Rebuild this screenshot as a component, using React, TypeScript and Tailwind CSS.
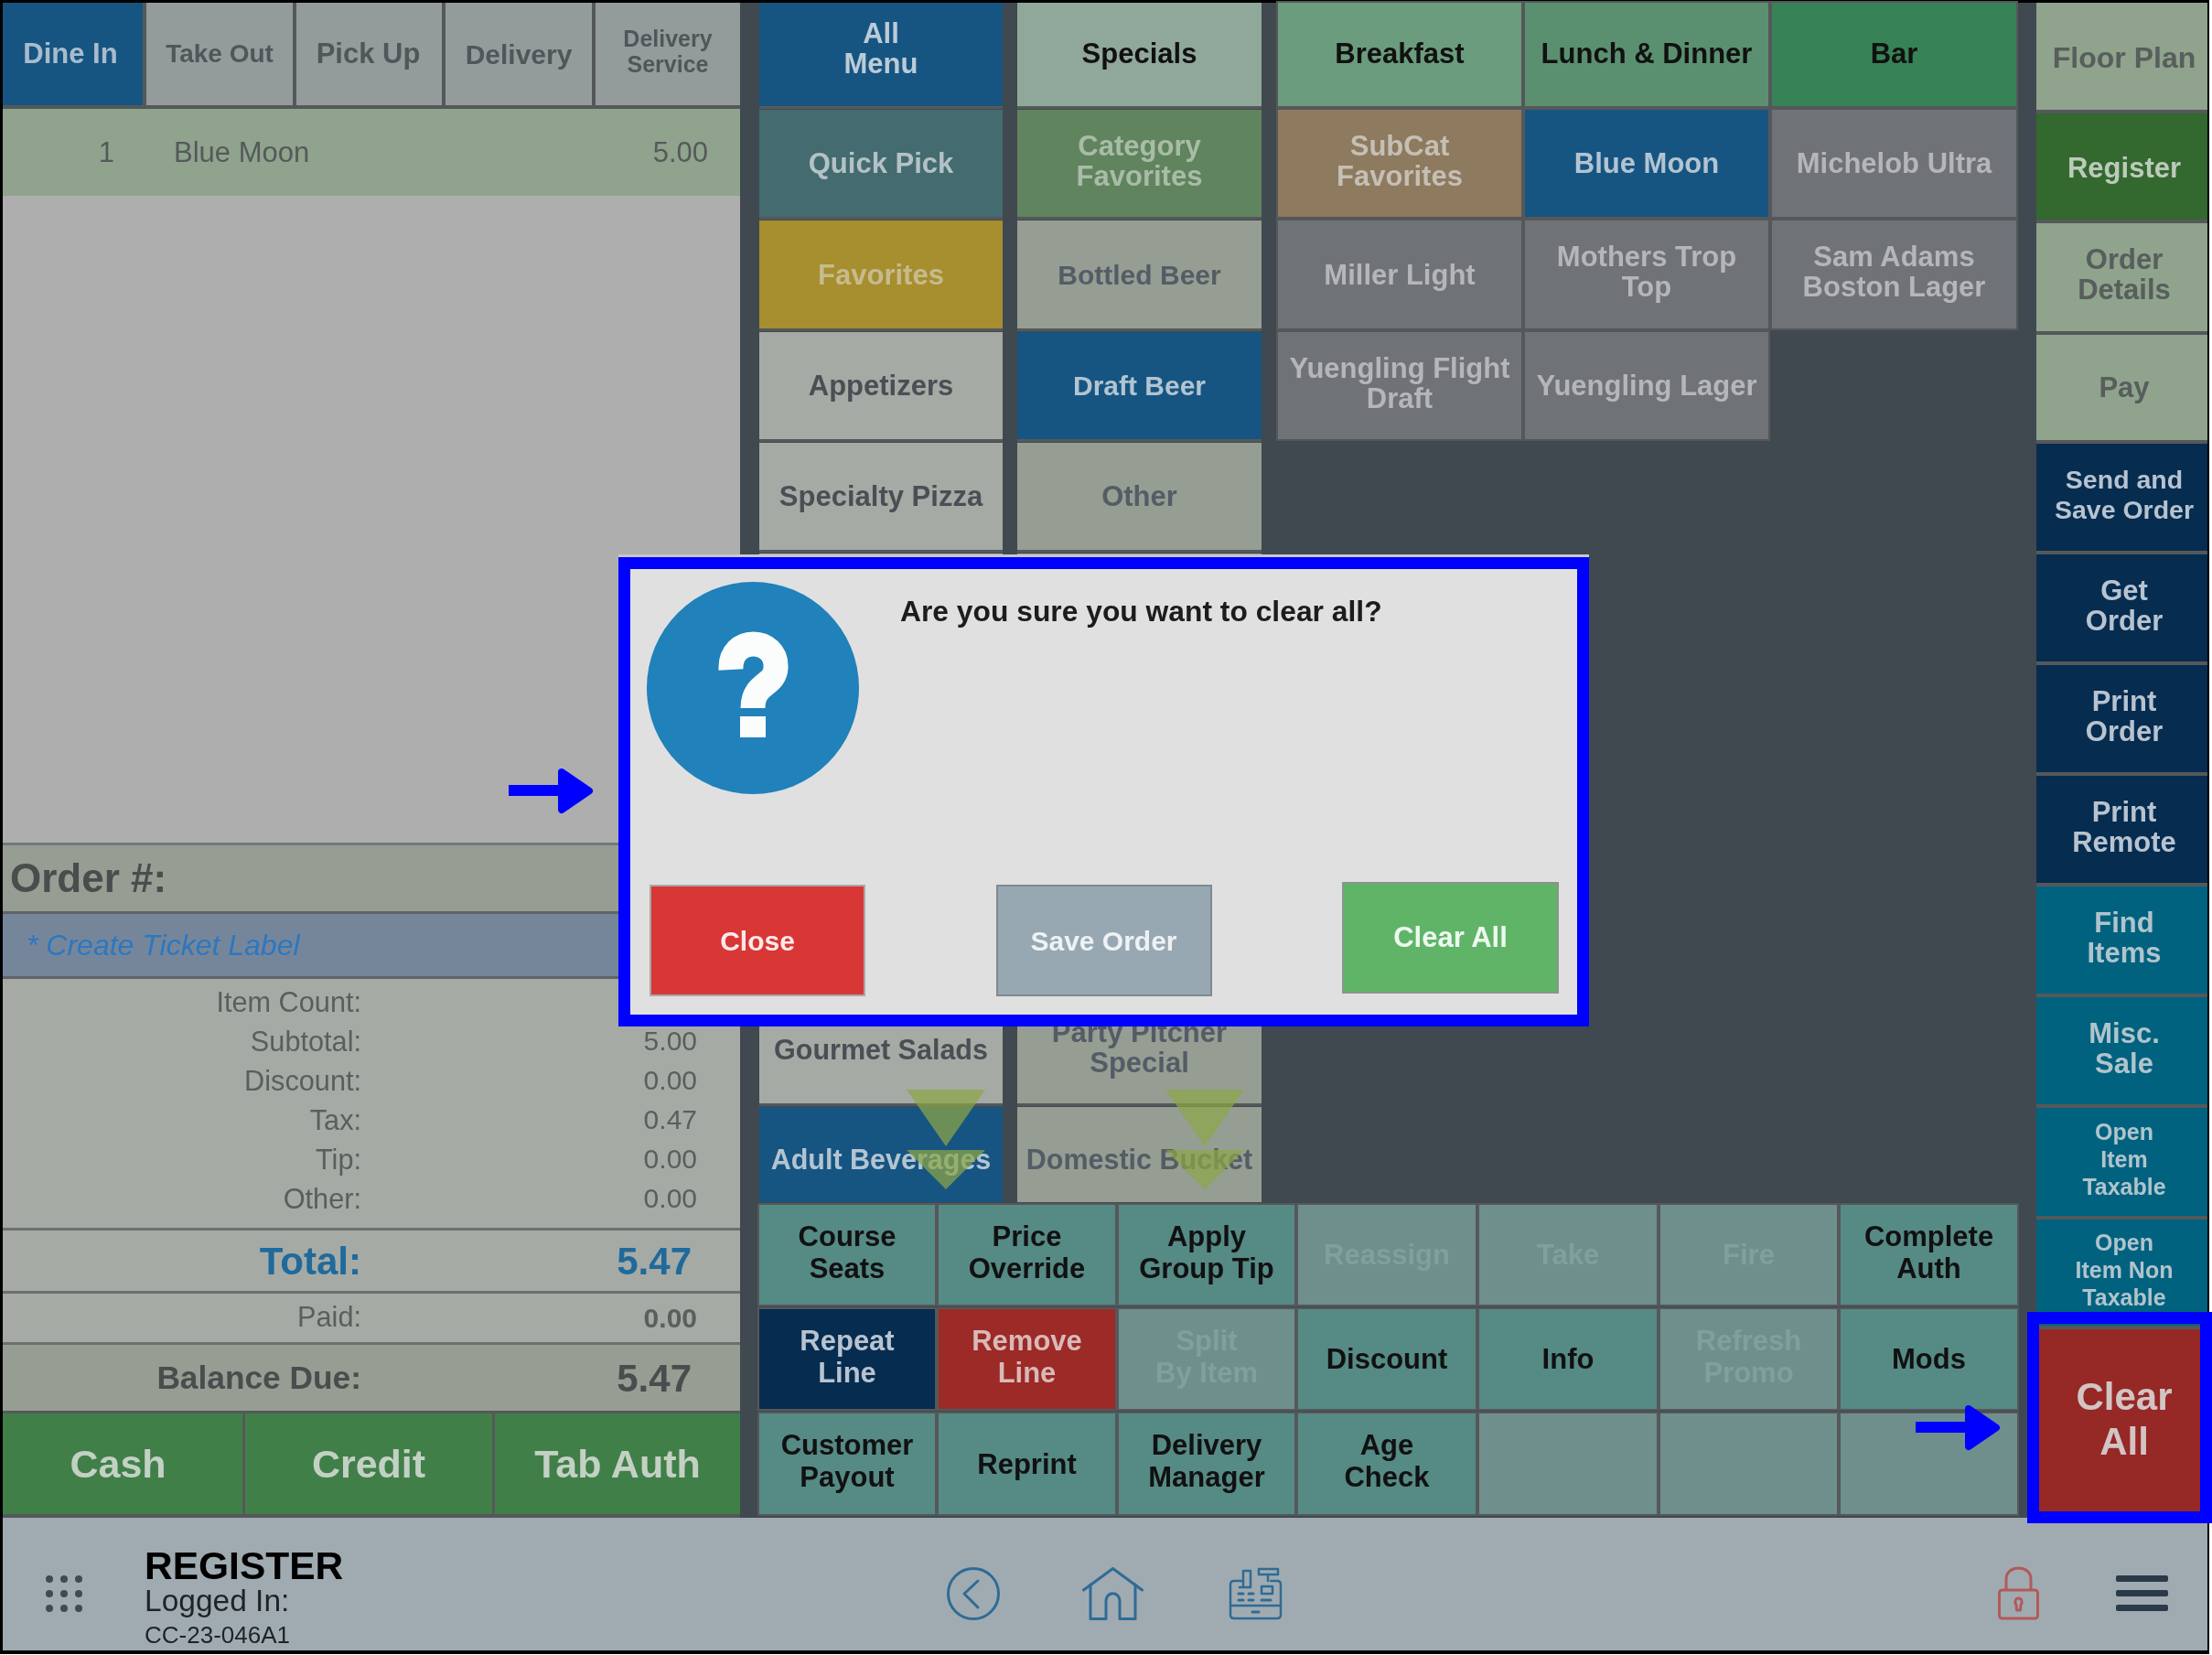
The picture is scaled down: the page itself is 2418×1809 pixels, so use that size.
type BtnProps = {
  label?: string;
  bg: string;
  text?: string;
  size?: string;
  extra?: string;
};

function Btn({ label = '', bg, text = '', size = 'text-[31px] leading-[33px] font-bold', extra = '' }: BtnProps) {
  // two and three line labels sit a little above the centre in the original
  const lift = label.includes('\n') ? 'pb-[6px]' : '';
  return (
    <div className={`flex items-center justify-center text-center whitespace-pre-line ${lift} ${bg} ${text} ${size} ${extra}`}>
      {label}
    </div>
  );
}

const BAR = 'shadow-[0_3px_0_#55585a]';
const BLUE = 'bg-[#165582]';
const LIGHT = 'bg-[#a6aaa5]';
const MID = 'bg-[#969d93]';
const SLATE = 'bg-[#6f7277]';

const tabs = [
  { label: 'Dine In', w: 'w-[153px] pr-[5px]', bg: BLUE, text: 'text-[#a9bccb]', size: 'text-[31px] font-bold' },
  { label: 'Take Out', w: 'w-[160px]', bg: 'bg-[#949c9b]', text: 'text-[#51565a]', size: 'text-[28px] font-bold' },
  { label: 'Pick Up', w: 'w-[159px] pr-[2px]', bg: 'bg-[#949c9b]', text: 'text-[#51565a]', size: 'text-[31px] font-bold' },
  { label: 'Delivery', w: 'w-[160px]', bg: 'bg-[#949c9b]', text: 'text-[#51565a]', size: 'text-[30px] font-bold' },
  { label: 'Delivery\nService', w: 'flex-1', bg: 'bg-[#949c9b]', text: 'text-[#51565a]', size: 'text-[25px] leading-[28px] font-bold' },
];

const summary = [
  ['Item Count:', ''],
  ['Subtotal:', '5.00'],
  ['Discount:', '0.00'],
  ['Tax:', '0.47'],
  ['Tip:', '0.00'],
  ['Other:', '0.00'],
];

const catLeft = [
  { label: 'All\nMenu', bg: BLUE, text: 'text-[#bccbd6]', extra: 'pb-[13px]!' },
  { label: 'Specials', bg: 'bg-[#90a89a]', text: 'text-[#111]', extra: 'pb-[2px]' },
  { label: 'Quick Pick', bg: 'bg-[#436b70]', text: 'text-[#b3c2c4]' },
  { label: 'Category\nFavorites', bg: 'bg-[#60845d]', text: 'text-[#a9bca8]' },
  { label: 'Favorites', bg: 'bg-[#a78e2e]', text: 'text-[#c6bb8e]' },
  { label: 'Bottled Beer', bg: MID, text: 'text-[#555c66]', extra: 'text-[30px]!' },
  { label: 'Appetizers', bg: LIGHT, text: 'text-[#4a4f55]' },
  { label: 'Draft Beer', bg: BLUE, text: 'text-[#b3c4d1]', extra: 'text-[30px]!' },
  { label: 'Specialty Pizza', bg: LIGHT, text: 'text-[#4a4f55]' },
  { label: 'Other', bg: MID, text: 'text-[#555c66]' },
];

const items = [
  { label: 'Breakfast', bg: 'bg-[#6b9c7d]', text: 'text-[#111]', extra: 'pb-[2px]' },
  { label: 'Lunch & Dinner', bg: 'bg-[#5a906f]', text: 'text-[#111]', extra: 'pb-[2px]' },
  { label: 'Bar', bg: 'bg-[#378256]', text: 'text-[#111]', extra: 'pb-[2px]' },
  { label: 'SubCat\nFavorites', bg: 'bg-[#8d7a5f]', text: 'text-[#c5bfb4]' },
  { label: 'Blue Moon', bg: BLUE, text: 'text-[#b3c4d1]' },
  { label: 'Michelob Ultra', bg: SLATE, text: 'text-[#b4b6b8]' },
  { label: 'Miller Light', bg: SLATE, text: 'text-[#b4b6b8]' },
  { label: 'Mothers Trop\nTop', bg: SLATE, text: 'text-[#b4b6b8]' },
  { label: 'Sam Adams\nBoston Lager', bg: SLATE, text: 'text-[#b4b6b8]' },
  { label: 'Yuengling Flight\nDraft', bg: SLATE, text: 'text-[#b4b6b8]' },
  { label: 'Yuengling Lager', bg: SLATE, text: 'text-[#b4b6b8]' },
];

const TEAL = 'bg-[#568a85]';
const DIM = 'bg-[#6f8f8c]';
const actions = [
  { label: 'Course\nSeats', bg: TEAL, text: 'text-[#111]' },
  { label: 'Price\nOverride', bg: TEAL, text: 'text-[#111]' },
  { label: 'Apply\nGroup Tip', bg: TEAL, text: 'text-[#111]' },
  { label: 'Reassign', bg: DIM, text: 'text-[#80a09d]' },
  { label: 'Take', bg: DIM, text: 'text-[#80a09d]' },
  { label: 'Fire', bg: DIM, text: 'text-[#80a09d]' },
  { label: 'Complete\nAuth', bg: TEAL, text: 'text-[#111]' },
  { label: 'Repeat\nLine', bg: 'bg-[#062c50]', text: 'text-[#b7c3cf]' },
  { label: 'Remove\nLine', bg: 'bg-[#9c2a27]', text: 'text-[#d9b9b8]' },
  { label: 'Split\nBy Item', bg: DIM, text: 'text-[#80a09d]' },
  { label: 'Discount', bg: TEAL, text: 'text-[#111]' },
  { label: 'Info', bg: TEAL, text: 'text-[#111]' },
  { label: 'Refresh\nPromo', bg: DIM, text: 'text-[#80a09d]' },
  { label: 'Mods', bg: TEAL, text: 'text-[#111]' },
  { label: 'Customer\nPayout', bg: TEAL, text: 'text-[#111]' },
  { label: 'Reprint', bg: TEAL, text: 'text-[#111]' },
  { label: 'Delivery\nManager', bg: TEAL, text: 'text-[#111]' },
  { label: 'Age\nCheck', bg: TEAL, text: 'text-[#111]' },
  { label: '', bg: DIM },
  { label: '', bg: DIM },
  { label: '', bg: DIM },
];

const SAGE = 'bg-[#8fa38d]';
const NAVY = 'bg-[#062c50]';
const SEA = 'bg-[#00627f]';
const sideButtons = [
  { label: 'Floor Plan', bg: SAGE, text: 'text-[#575e5c]', size: 'text-[32px] leading-[33px] font-bold pt-[3px]' },
  { label: 'Register', bg: 'bg-[#33682f]', text: 'text-[#bccabb]', size: 'text-[31px] leading-[33px] font-bold pt-[2px]' },
  { label: 'Order\nDetails', bg: SAGE, text: 'text-[#575e5c]', size: 'text-[31px] leading-[33px] font-bold' },
  { label: 'Pay', bg: SAGE, text: 'text-[#575e5c]', size: 'text-[31px] leading-[33px] font-bold' },
  { label: 'Send and\nSave Order', bg: NAVY, text: 'text-[#b7c3cf]', size: 'text-[28.5px] leading-[33px] font-bold' },
  { label: 'Get\nOrder', bg: NAVY, text: 'text-[#b7c3cf]', size: 'text-[31px] leading-[33px] font-bold' },
  { label: 'Print\nOrder', bg: NAVY, text: 'text-[#b7c3cf]', size: 'text-[31px] leading-[33px] font-bold' },
  { label: 'Print\nRemote', bg: NAVY, text: 'text-[#b7c3cf]', size: 'text-[31px] leading-[33px] font-bold' },
  { label: 'Find\nItems', bg: SEA, text: 'text-[#b0c4cc]', size: 'text-[31px] leading-[33px] font-bold' },
  { label: 'Misc.\nSale', bg: SEA, text: 'text-[#b0c4cc]', size: 'text-[31px] leading-[33px] font-bold' },
  { label: 'Open\nItem\nTaxable', bg: SEA, text: 'text-[#b0c4cc]', size: 'text-[25px] leading-[30px] font-bold' },
  { label: 'Open\nItem Non\nTaxable', bg: SEA, text: 'text-[#b0c4cc]', size: 'text-[25px] leading-[30px] font-bold' },
  { label: 'Clear\nAll', bg: 'bg-[#962825]', text: 'text-[#d2c4c4]', size: 'text-[42px] leading-[49px] font-bold' },
];

function Arrow({ className }: { className: string }) {
  return (
    <svg viewBox="0 0 93 51" className={className}>
      <rect x="0" y="19" width="60" height="12" fill="#0000ff" />
      <path d="M58 5 L88 25.5 L58 46 Z" fill="#0000ff" stroke="#0000ff" strokeWidth="8" strokeLinejoin="round" />
    </svg>
  );
}

function DropTriangles({ className }: { className: string }) {
  return (
    <svg viewBox="0 0 86 109" className={className}>
      <polygon points="0,0 86,0 43,62" fill="#8ca646" fillOpacity="0.72" />
      <polygon points="0,66 86,66 43,109" fill="#8ca646" fillOpacity="0.72" />
    </svg>
  );
}

export default function App() {
  return (
    <div className="relative w-[2418px] h-[1809px] bg-white font-['Liberation_Sans',sans-serif] overflow-hidden">
      <div className="w-[2415px] h-[1808px] bg-black pt-[3px] pl-[3px] pr-[2px] pb-[4px] blur-[0.7px]">
        <div className="flex flex-col h-full">
          {/* Main area */}
          <div className="flex shrink-0 h-[1656px] bg-[#40494f]">
            {/* Order panel */}
            <div className="flex flex-col w-[806px] shrink-0">
              <div className="flex h-[116px] gap-[4px] bg-[#55585a] pb-[4px]">
                {tabs.map((t) => (
                  <Btn key={t.label} label={t.label} bg={t.bg} text={t.text} size={t.size} extra={t.w} />
                ))}
              </div>
              <div className="flex items-center h-[95px] pt-[2px] bg-[#8fa38d] text-[31px] text-[#55595a]">
                <span className="w-[122px] text-right">1</span>
                <span className="ml-[65px]">Blue Moon</span>
                <span className="ml-auto pr-[35px]">5.00</span>
              </div>
              <div className="h-[707px] bg-[#aeaeae]" />
              <div className="flex items-center h-[75px] bg-[#969d93] border-t-[3px] border-[#73777a] pl-[8px] text-[44px] font-bold text-[#4a4d4e]">
                Order #:
              </div>
              <div className="flex items-center h-[74px] bg-[#76869a] border-y-[3px] border-[#5f6468] pl-[26px] text-[32px] italic text-[#2c77c0]">
                * Create Ticket Label
              </div>
              <div className="flex flex-col h-[272px] bg-[#a6aaa5] pt-[3px] text-[#5a5e5d]">
                {summary.map(([name, value]) => (
                  <div key={name} className="flex items-center h-[43px]">
                    <span className="w-[392px] pt-[3px] text-right text-[30.7px]">{name}</span>
                    <span className="flex-1 text-right pr-[47px] text-[30px]">{value}</span>
                  </div>
                ))}
              </div>
              <div className="flex items-center h-[69px] bg-[#a6aaa5] border-t-[3px] border-[#6c7070] text-[#1f6a9c] font-bold">
                <span className="w-[392px] text-right text-[42px]">Total:</span>
                <span className="flex-1 text-right pr-[53px] text-[42px]">5.47</span>
              </div>
              <div className="flex items-center h-[56px] bg-[#a6aaa5] border-t-[3px] border-[#6c7070] text-[#5a5e5d]">
                <span className="w-[392px] text-right text-[30.7px]">Paid:</span>
                <span className="flex-1 text-right pr-[47px] text-[30px] font-bold">0.00</span>
              </div>
              <div className="flex items-center h-[75px] bg-[#969d93] border-t-[3px] border-[#6c7070] text-[#4a4d4e] font-bold">
                <span className="w-[392px] text-right text-[35.3px]">Balance Due:</span>
                <span className="flex-1 text-right pr-[53px] text-[42px]">5.47</span>
              </div>
              <div className="flex flex-1 gap-[3px] bg-[#55585a] pt-[3px] pb-[4px]">
                <Btn label="Cash" bg="bg-[#417f48]" text="text-[#c3d1c5]" size="text-[43px] font-bold" extra="w-[262px] pr-[10px]" />
                <Btn label="Credit" bg="bg-[#417f48]" text="text-[#c3d1c5]" size="text-[43px] font-bold" extra="w-[270px]" />
                <Btn label="Tab Auth" bg="bg-[#417f48]" text="text-[#c3d1c5]" size="text-[43px] font-bold" extra="flex-1" />
              </div>
            </div>

            {/* Menu column */}
            <div className="flex flex-col w-[1374px] ml-[21px]">
              <div className="flex h-[1311px] gap-[18px]">
                <div className="relative grid grid-cols-[266px_267px] gap-x-[16px] gap-y-[4px] grid-rows-[113px_117px_118px_117px_117px_117px_117px_117px_117px_117px_104px]">
                  {catLeft.map((c) => (
                    <Btn key={c.label} label={c.label} bg={c.bg} text={c.text} extra={`${BAR} ${c.extra ?? ''}`} />
                  ))}
                  {/* rows behind the dialog */}
                  {[0, 1, 2, 3, 4, 5, 6, 7].map((i) => (
                    <Btn key={i} bg={i % 2 ? MID : LIGHT} />
                  ))}
                  <Btn label="Gourmet Salads" bg={LIGHT} text="text-[#4a4f55]" extra={`${BAR} text-[30.5px]!`} />
                  <Btn label={'Party Pitcher\nSpecial'} bg={MID} text="text-[#555c66]" extra={BAR} />
                  <Btn label="Adult Beverages" bg={BLUE} text="text-[#b3c4d1]" extra="pt-[10px] text-[30.5px]!" />
                  <Btn label="Domestic Bucket" bg={MID} text="text-[#555c66]" extra="pt-[10px] text-[30.5px]!" />
                  <DropTriangles className="absolute left-[161px] top-[1188px] w-[86px] h-[109px]" />
                  <DropTriangles className="absolute left-[444px] top-[1188px] w-[86px] h-[109px]" />
                </div>
                <div className="grid grid-cols-[266px_266px_267px] gap-[4px] grid-rows-[113px_117px_118px_117px] content-start">
                  {items.map((c) => (
                    <Btn key={c.label} label={c.label} bg={c.bg} text={c.text} extra={`ring-2 ring-[#55585a] ${c.extra ?? ''}`} />
                  ))}
                </div>
              </div>
              <div className="grid grid-cols-[192px_193px_192px_194px_194px_193px_193px] gap-x-[4px] gap-y-[5px] grid-rows-[109px_109px_110px] h-[338px] mt-[3px]">
                {actions.map((a, i) => (
                  <Btn
                    key={i}
                    label={a.label}
                    bg={a.bg}
                    text={a.text}
                    size="text-[31px] leading-[35px] font-bold"
                    extra="ring-2 ring-[#55585a]"
                  />
                ))}
              </div>
            </div>

            {/* Action column */}
            <div className="grid grid-rows-[117px_116px_118px_115px_117px_117px_117px_117px_117px_117px_118px_116px_202px] gap-y-[4px] w-[187px] ml-[22px] h-[1652px] bg-[#55585a]">
              {sideButtons.map((b) => (
                <Btn key={b.label} label={b.label} bg={b.bg} text={b.text} size={b.size} extra="pl-[5px]" />
              ))}
            </div>
          </div>

          {/* Footer */}
          <div className="flex items-center flex-1 min-h-0 bg-[#a0abb1]">
            <svg viewBox="0 0 41 41" className="w-[41px] h-[41px] ml-[47px] mt-[22px]" fill="#3f4a52">
              {[4, 20, 36].map((y) =>
                [4, 20, 36].map((x) => <circle key={`${x}-${y}`} cx={x} cy={y} r="4" />)
              )}
            </svg>
            <div className="flex flex-col self-start w-[300px] ml-[67px] mt-[32px] text-[#1e2326]">
              <span className="text-[42.5px] leading-[42px] font-bold text-black">REGISTER</span>
              <span className="text-[33.5px] leading-[33px]">Logged In:</span>
              <span className="text-[26px] leading-[42px]">CC-23-046A1</span>
            </div>
            <svg viewBox="0 0 58 58" className="w-[58px] h-[58px] ml-[577px] mt-[20px]" fill="none" stroke="#2f6b96" strokeWidth="3">
              <circle cx="29" cy="29" r="27.5" />
              <path d="M34 15 L19 29 L34 44" strokeLinecap="round" strokeLinejoin="round" />
            </svg>
            <svg viewBox="0 0 67 58" className="w-[67px] h-[58px] ml-[90px] mt-[20px]" fill="none" stroke="#2f6b96" strokeWidth="3" strokeLinejoin="round" strokeLinecap="round">
              <path d="M1.5 25 L33.5 1.5 L65.5 25" />
              <path d="M9 19 V56.5 H26 V37 C26 26 41 26 41 37 V56.5 H58 V19" />
            </svg>
            <svg viewBox="0 0 59 58" className="w-[59px] h-[58px] ml-[93px] mt-[20px]" fill="none" stroke="#2f6b96" strokeWidth="2.5" strokeLinejoin="round" strokeLinecap="round">
              <path d="M14 15 H6 Q2 15 2 19 V52 Q2 56 6 56 H53 Q57 56 57 52 V19 Q57 15 53 15 H46" />
              <path d="M2 42 H57" />
              <path d="M16 22 V4 H24 V22 H12" />
              <path d="M33 2 H54 V8 H33 Z" />
              <path d="M43 8 V15 M36 21 H48 V29 H36 Z" />
              <path d="M11 29 H16 M22 29 H27 M11 36 H16 M22 36 H27 M36 36 H46 M26 49 H33" strokeWidth="3" />
            </svg>
            <svg viewBox="0 0 45 59" className="w-[45px] h-[59px] ml-[782px] mt-[20px]" fill="none" stroke="#b25a5a" strokeWidth="3" strokeLinejoin="round">
              <path d="M9 26 V14 C9 -2 36 -2 36 14 V26" />
              <rect x="1.5" y="26" width="42" height="31" rx="3" />
              <path d="M22.5 35 C26.5 35 27 40 25 42 L24.5 48 H20.5 L20 42 C18 40 18.5 35 22.5 35 Z" />
            </svg>
            <div className="flex flex-col gap-[9px] w-[57px] ml-[84px] mt-[20px]">
              <div className="h-[7px] rounded-[2px] bg-[#2a3a48]" />
              <div className="h-[7px] rounded-[2px] bg-[#2a3a48]" />
              <div className="h-[7px] rounded-[2px] bg-[#2a3a48]" />
            </div>
          </div>
        </div>
      </div>

      {/* Annotation overlay */}
      <Arrow className="absolute left-[556px] top-[839px] w-[93px] h-[51px]" />
      <Arrow className="absolute left-[2094px] top-[1535px] w-[93px] h-[51px]" />
      <div className="absolute left-[2216px] top-[1434px] w-[202px] h-[231px] border-[13px] border-[#0000ff]" />

      {/* Confirm dialog */}
      <div className="absolute left-[676px] top-[606px] w-[1061px] h-[516px] border-t-[3px] border-[#c9c9c9]">
        <div className="h-full bg-[#e0e0e0] border-[13px] border-[#0000ff]">
          <div className="flex flex-col h-full blur-[0.7px]">
            <div className="flex flex-1 pl-[18px] pt-[14px]">
              <svg viewBox="0 0 232 232" className="w-[232px] h-[232px]">
                <circle cx="116" cy="116" r="116" fill="#2081bb" />
                <path d="M92 96 C90 58 143 60 141 94 C140 114 116 110 116 138" fill="none" stroke="#fafdfb" strokeWidth="27" />
                <rect x="102" y="147" width="28" height="23" fill="#fafdfb" />
              </svg>
              <p className="ml-[45px] mt-[14px] text-[31.8px] leading-[36px] font-bold text-[#1c1c1c]">
                Are you sure you want to clear all?
              </p>
            </div>
            <div className="flex justify-between items-start pl-[21px] pr-[20px] h-[142px]">
              <Btn label="Close" bg="bg-[#d93636]" text="text-[#fbeaea]" size="text-[30px] font-bold" extra="w-[236px] h-[122px] border-2 border-[#a8a8a8]" />
              <Btn label="Save Order" bg="bg-[#98a8b2]" text="text-[#eef2f4]" size="text-[30px] font-bold" extra="w-[236px] h-[122px] border-2 border-[#808a90]" />
              <Btn label="Clear All" bg="bg-[#5fb468]" text="text-[#eef8ef]" size="text-[31px] font-bold" extra="w-[237px] h-[122px] -mt-[3px] border-2 border-[#8a958b]" />
            </div>
          </div>
        </div>
      </div>
    </div>
  );
}
